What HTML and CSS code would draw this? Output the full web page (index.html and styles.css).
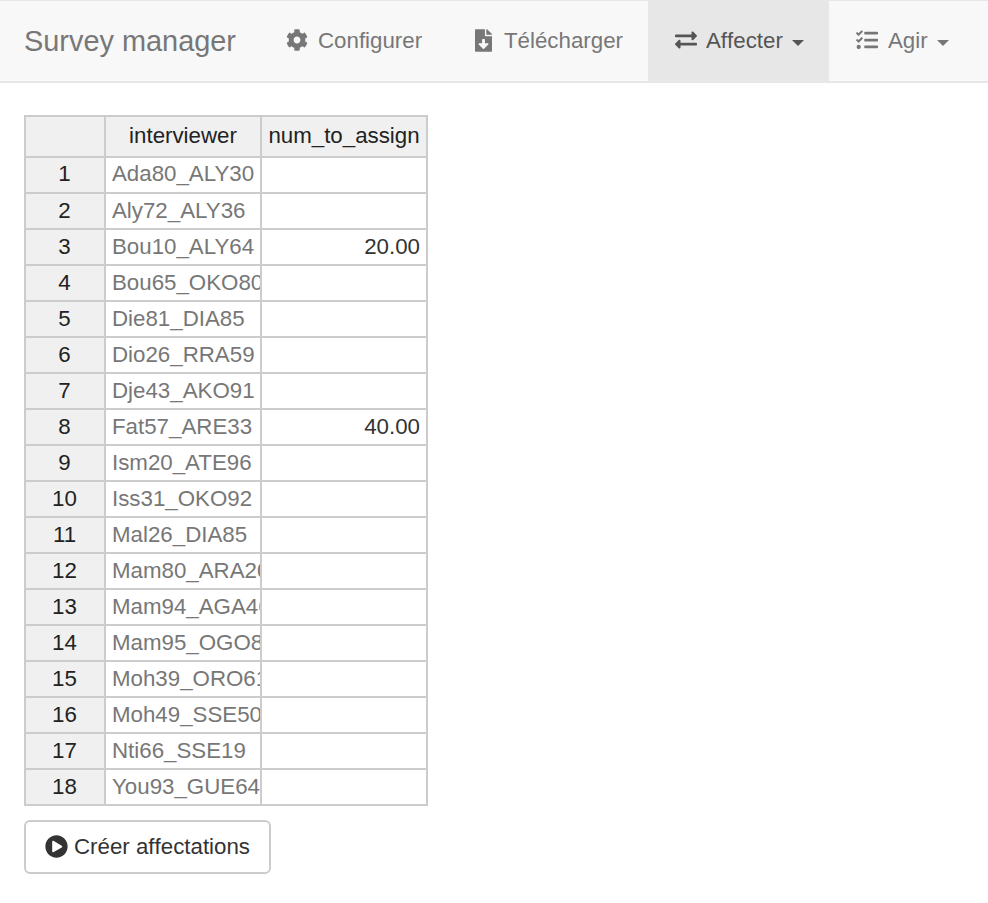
FILE: index.html
```html
<!DOCTYPE html>
<html lang="fr">
<head>
<meta charset="utf-8">
<title>Survey manager</title>
<link rel="stylesheet" href="styles.css">
</head>
<body>
<nav class="navbar">
  <span class="brand">Survey manager</span>
  <a class="tab tab-config"><svg class="icon" viewBox="0 0 512 512"><path d="M487.400 315.700l-42.600-24.600c4.300-23.200 4.300-47 0-70.200l42.600-24.600c4.900-2.800 7.100-8.600 5.500-14-11.100-35.600-30-67.800-54.700-94.600-3.800-4.100-10-5.100-14.800-2.300L380.800 110c-17.900-15.400-38.500-27.300-60.800-35.100V25.800c0-5.600-3.900-10.500-9.400-11.700-36.700-8.200-74.300-7.800-109.200 0-5.500 1.200-9.400 6.100-9.400 11.700V75c-22.200 7.900-42.800 19.800-60.800 35.100L88.700 85.500c-4.900-2.800-11-1.900-14.800 2.300-24.700 26.700-43.600 58.900-54.700 94.600-1.700 5.400.6 11.200 5.500 14L67.300 221c-4.300 23.200-4.300 47 0 70.200l-42.600 24.600c-4.900 2.800-7.100 8.600-5.500 14 11.100 35.600 30 67.800 54.700 94.600 3.800 4.100 10 5.100 14.800 2.300l42.600-24.600c17.900 15.400 38.500 27.300 60.800 35.100v49.200c0 5.600 3.900 10.500 9.400 11.700 36.700 8.200 74.300 7.800 109.200 0 5.500-1.200 9.400-6.100 9.400-11.700v-49.200c22.200-7.900 42.800-19.800 60.800-35.100l42.600 24.600c4.900 2.800 11 1.900 14.800-2.300 24.700-26.700 43.600-58.900 54.700-94.600 1.500-5.500-.7-11.300-5.600-14.100zM256 336c-44.100 0-80-35.900-80-80s35.900-80 80-80 80 35.900 80 80-35.900 80-80 80z"/></svg>Configurer</a>
  <a class="tab tab-download"><svg class="icon icon-file" viewBox="0 0 384 512"><path d="M224 136V0H24C10.700 0 0 10.700 0 24v464c0 13.300 10.700 24 24 24h336c13.300 0 24-10.700 24-24V160H248c-13.200 0-24-10.800-24-24zm76.450 211.360l-96.420 95.700c-6.650 6.610-17.390 6.610-24.040 0l-96.420-95.700C73.420 337.290 80.540 320 94.820 320H160v-80c0-8.840 7.160-16 16-16h32c8.840 0 16 7.160 16 16v80h65.180c14.280 0 21.400 17.290 11.270 27.360zM377 105L279.100 7c-4.500-4.500-10.600-7-17-7H256v128h128v-6.100c0-6.300-2.500-12.400-7-16.900z"/></svg>Télécharger</a>
  <a class="tab tab-assign active"><svg class="icon" viewBox="0 0 512 512"><path d="M0 168v-16c0-13.255 10.745-24 24-24h360V80c0-21.367 25.899-32.042 40.971-16.971l80 80c9.372 9.373 9.372 24.569 0 33.941l-80 80C409.956 271.982 384 261.456 384 240v-48H24c-13.255 0-24-10.745-24-24zm488 152H128v-48c0-21.314-25.862-32.080-40.971-16.971l-80 80c-9.372 9.373-9.372 24.569 0 33.941l80 80C102.057 463.997 128 453.437 128 432v-48h360c13.255 0 24-10.745 24-24v-16c0-13.255-10.745-24-24-24z"/></svg>Affecter<span class="caret"></span></a>
  <a class="tab tab-act"><svg class="icon" viewBox="0 0 512 512"><path d="M139.610 35.500a12 12 0 0 0-17 0L58.930 98.810l-22.700-22.120a12 12 0 0 0-17 0L3.530 92.410a12 12 0 0 0 0 17l47.590 47.400a12.780 12.780 0 0 0 17.610 0l15.590-15.620L156.520 69a12.090 12.090 0 0 0 .09-17zm0 159.190a12 12 0 0 0-17 0l-63.680 63.720-22.700-22.100a12 12 0 0 0-17 0L3.530 252a12 12 0 0 0 0 17L51 316.500a12.770 12.770 0 0 0 17.600 0l15.700-15.690 72.200-72.220a12 12 0 0 0 .09-16.900zM64 368c-26.490 0-48.590 21.500-48.590 48S37.530 464 64 464a48 48 0 0 0 0-96zm432 16H208a16 16 0 0 0-16 16v32a16 16 0 0 0 16 16h288a16 16 0 0 0 16-16v-32a16 16 0 0 0-16-16zm0-320H208a16 16 0 0 0-16 16v32a16 16 0 0 0 16 16h288a16 16 0 0 0 16-16V80a16 16 0 0 0-16-16zm0 160H208a16 16 0 0 0-16 16v32a16 16 0 0 0 16 16h288a16 16 0 0 0 16-16v-32a16 16 0 0 0-16-16z"/></svg>Agir<span class="caret"></span></a>
</nav>
<main class="content">
  <div class="sheet">
    <div class="head"></div><div class="head">interviewer</div><div class="head">num_to_assign</div>
    <div class="num first">1</div><div class="name first">Ada80_ALY30</div><div class="value"></div>
    <div class="num">2</div><div class="name">Aly72_ALY36</div><div class="value"></div>
    <div class="num">3</div><div class="name">Bou10_ALY64</div><div class="value">20.00</div>
    <div class="num">4</div><div class="name">Bou65_OKO80</div><div class="value"></div>
    <div class="num">5</div><div class="name">Die81_DIA85</div><div class="value"></div>
    <div class="num">6</div><div class="name">Dio26_RRA59</div><div class="value"></div>
    <div class="num">7</div><div class="name">Dje43_AKO91</div><div class="value"></div>
    <div class="num">8</div><div class="name">Fat57_ARE33</div><div class="value">40.00</div>
    <div class="num">9</div><div class="name">Ism20_ATE96</div><div class="value"></div>
    <div class="num">10</div><div class="name">Iss31_OKO92</div><div class="value"></div>
    <div class="num">11</div><div class="name">Mal26_DIA85</div><div class="value"></div>
    <div class="num">12</div><div class="name">Mam80_ARA20</div><div class="value"></div>
    <div class="num">13</div><div class="name">Mam94_AGA46</div><div class="value"></div>
    <div class="num">14</div><div class="name">Mam95_OGO8</div><div class="value"></div>
    <div class="num">15</div><div class="name">Moh39_ORO61</div><div class="value"></div>
    <div class="num">16</div><div class="name">Moh49_SSE50</div><div class="value"></div>
    <div class="num">17</div><div class="name">Nti66_SSE19</div><div class="value"></div>
    <div class="num">18</div><div class="name">You93_GUE64</div><div class="value"></div>
  </div>
  <button class="create"><svg class="icon-play" viewBox="0 0 512 512"><path d="M256 8C119 8 8 119 8 256s111 248 248 248 248-111 248-248S393 8 256 8zm115.700 272l-176 101c-15.800 8.800-35.700-2.500-35.700-21V152c0-18.400 19.800-29.800 35.700-21l176 107c16.400 9.200 16.400 32.900 0 42z"/></svg><span class="create-label">Créer affectations</span></button>
</main>
</body>
</html>
```

FILE: styles.css
```css
* { box-sizing: border-box; }

body {
  margin: 0;
  background: #fff;
  color: #333;
  font-family: "Liberation Sans", Arial, sans-serif;
  font-size: 22.3px;
  font-kerning: none;
}

.navbar {
  display: flex;
  height: 83px;
  background: #f8f8f8;
  border-top: 1px solid #e7e7eb;
  box-shadow: inset 0 -2px #e7e7e7;
  color: #777;
}

.brand {
  width: 260px;
  padding-left: 24px;
  font-size: 28.9px;
  line-height: 80px;
}

.tab {
  display: flex;
  align-items: center;
  height: 82px;
  padding: 0 0 2px 26px;
  white-space: nowrap;
}

.tab-config { width: 188px; }
.tab-download { width: 200px; }
.tab-assign { width: 181px; }
.tab-act { width: 159px; }

.tab-assign,
.tab-act { padding-left: 27px; }

.active {
  background: #e7e7e7;
  color: #555;
}

.icon {
  width: 22px;
  height: 22px;
  margin: -2px 10px 0 0;
  fill: currentColor;
}

.tab-assign .icon { margin-right: 9px; }

.icon-file {
  width: 17px;
  height: 23px;
  margin: -2px 12px 0 1px;
}

.caret {
  margin: 3px 0 0 9px;
  border: 6px solid transparent;
  border-top-color: currentColor;
  border-bottom: 0;
}

.content { padding: 32px 24px; }

.sheet {
  display: grid;
  grid-template-columns: 78px 154px 164px;
  grid-template-rows: 39px;
  grid-auto-rows: 34px;
  gap: 2px;
  width: 404px;
  padding: 2px;
  background: #ccc;
}

.head,
.num {
  background: #f0f0f0;
  color: #222;
  text-align: center;
  line-height: 34px;
}

.num {
  padding-right: 1px;
  font-kerning: normal;
}

.head { line-height: 37px; }

.name,
.value {
  overflow: hidden;
  background: #fff;
  line-height: 34px;
  white-space: nowrap;
}

.name {
  padding-left: 6px;
  color: #777;
  font-kerning: normal;
}

.value {
  padding-right: 6px;
  text-align: right;
}

.first { line-height: 32px; }

.create {
  display: flex;
  align-items: center;
  width: 247px;
  height: 54px;
  margin-top: 14px;
  padding: 0 0 2px 19px;
  border: 2px solid #ccc;
  border-radius: 6px;
  background: #fff;
  color: #333;
  font: inherit;
  font-kerning: none;
  white-space: nowrap;
}

.create-label { padding-top: 2px; }

.icon-play {
  width: 23px;
  height: 23px;
  margin-right: 6px;
  fill: currentColor;
}
```
